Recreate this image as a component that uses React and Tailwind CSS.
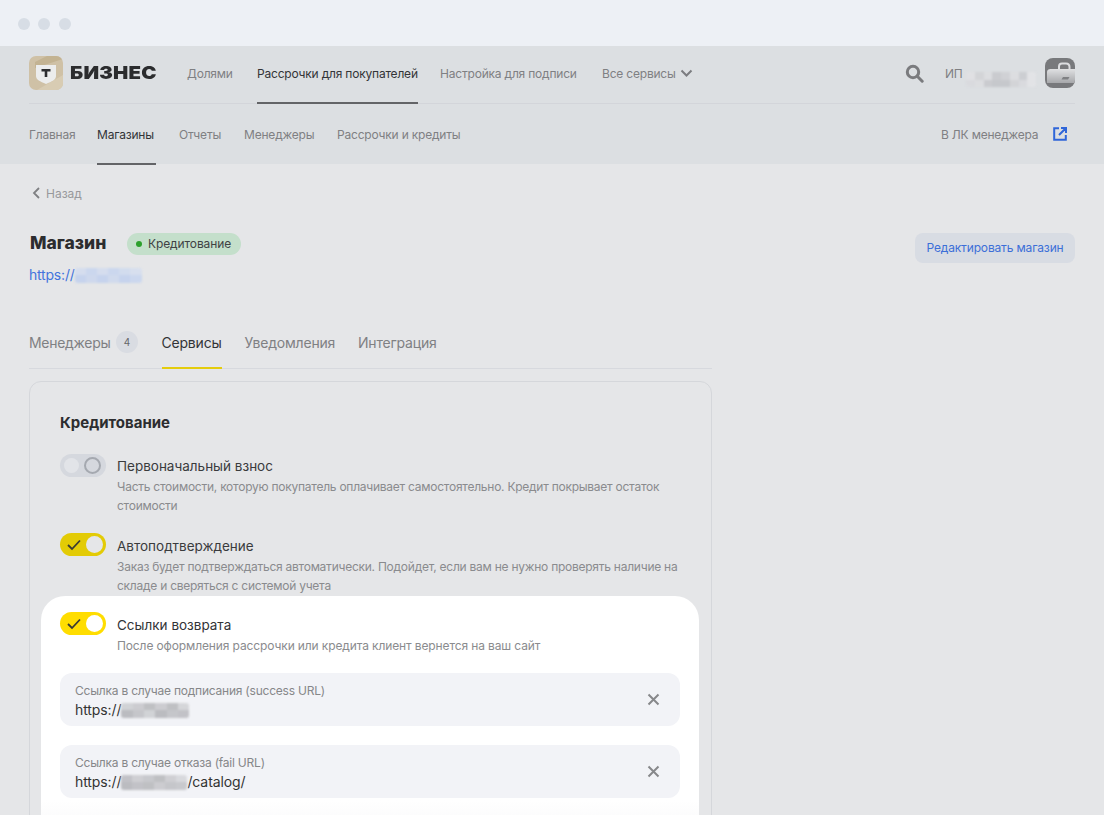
import React from "react";

const font = { fontFamily: '"Inter","Noto Sans",sans-serif' };

function Pix({ w, h = 15, color, base, cols }) {
  return (
    <span className="inline-flex overflow-hidden blur-[1px] align-middle rounded-[3px]" style={{ width: w, height: h, backgroundColor: base }}>
      {cols.map((c, i) => (
        <span key={i} className="flex-1 h-full flex flex-col">
          <span className="flex-1" style={{ backgroundColor: color, opacity: c[0] }} />
          <span className="flex-1" style={{ backgroundColor: color, opacity: c[1] }} />
        </span>
      ))}
    </span>
  );
}

function Toggle({ on, top, dim }) {
  return (
    <div
      className={`absolute left-[60px] w-[46px] h-[23px] rounded-full ${on ? (dim ? "bg-[#e3cb05]" : "bg-[#ffdd00]") : "bg-[#d5d8de]"}`}
      style={{ top }}
    >
      {on ? (
        <>
          <svg className="absolute left-[6px] top-[5px]" width="16" height="13" viewBox="0 0 16 13" fill="none">
            <path d="M2 7l4 4 8-8.5" stroke="#3a3a32" strokeWidth="1.8" />
          </svg>
          <div className={`absolute right-[3px] top-[3px] w-[17px] h-[17px] rounded-full ${dim ? "bg-[#e5e6e8]" : "bg-white"}`} />
        </>
      ) : (
        <>
          <div className="absolute left-[4px] top-[4px] w-[15px] h-[15px] rounded-full bg-[#e2e4e8]" />
          <div className="absolute right-[5px] top-[3px] w-[17px] h-[17px] rounded-full border-2 border-[#a5a9b0]" />
        </>
      )}
    </div>
  );
}

function Field({ top, label, children }) {
  return (
    <div className="absolute left-[60px] w-[620px] h-[53px] rounded-[12px] bg-[#f2f3f7]" style={{ top }}>
      <div className="absolute left-[15px] top-[10px] text-[12px] tracking-[-0.22px] leading-[15px] text-[#868789]">{label}</div>
      <div className="absolute left-[15px] top-[27px] text-[14px] tracking-[-0.1px] leading-[20px] text-[#333333] flex items-center">{children}</div>
      <svg className="absolute left-[587px] top-[20px]" width="13" height="13" viewBox="0 0 13 13" fill="none">
        <path d="M1.5 1.5l10 10M11.5 1.5l-10 10" stroke="#87888b" strokeWidth="2" />
      </svg>
    </div>
  );
}

const nav = "absolute text-[12px] tracking-[-0.2px] leading-[18px]";
const desc = "absolute left-[117px] w-[590px] text-[12px] tracking-[-0.25px] leading-[19px] text-[#8a8b8e]";
const tab = "absolute top-[334px] text-[14px] tracking-[-0.2px] leading-[18px]";
const rowTitle = "absolute left-[117px] text-[13.5px] leading-[18px]";

export default function App() {
  return (
    <div className="relative w-[1104px] h-[815px] overflow-hidden bg-[#e5e6e8]" style={font}>
      {/* window bar */}
      <div className="absolute inset-x-0 top-0 h-[46px] bg-[#edf0f5]">
        <div className="absolute left-[17.5px] top-[18px] w-[12px] h-[12px] rounded-full bg-[#d7dde5]" />
        <div className="absolute left-[38px] top-[18px] w-[12px] h-[12px] rounded-full bg-[#d7dde5]" />
        <div className="absolute left-[59px] top-[18px] w-[12px] h-[12px] rounded-full bg-[#d7dde5]" />
      </div>

      {/* header */}
      <div className="absolute inset-x-0 top-[46px] h-[118px] bg-[#dcdfe2]">
        <div className="absolute left-[29px] right-[29px] top-[57px] h-px bg-[#d3d5da]" />

        <div className="absolute left-[29px] top-[10px] w-[34px] h-[34px] rounded-[7px] overflow-hidden bg-[#cfc1a6]">
          <svg width="34" height="34" viewBox="0 0 34 34">
            <path d="M18 0H34V3L6 12V6Z" fill="#c3b392" />
            <path d="M8 34L34 19V34Z" fill="#d8ccb3" />
            <path d="M7 9H27V20C27 23.5 23 25.5 17 28 11 25.5 7 23.5 7 20Z" fill="#eceded" />
            <path d="M12.5 13H21.5V15.4H18.3V21H15.7V15.4H12.5Z" fill="#2d2e30" />
          </svg>
        </div>
        <div className="absolute left-[70px] top-[16px] text-[18px] leading-[22px] font-black text-[#2b2c2e] tracking-[0.2px] [transform:scaleX(1.13)] origin-left">БИЗНЕС</div>

        <div className={`${nav} left-[187px] top-[19px] text-[#7f8083]`}>Долями</div>
        <div className={`${nav} left-[257px] top-[19px] text-[#333437]`}>Рассрочки для покупателей</div>
        <div className="absolute left-[257px] top-[56px] w-[161px] h-[2px] bg-[#636467]" />
        <div className={`${nav} left-[440px] top-[19px] text-[#7f8083]`}>Настройка для подписи</div>
        <div className={`${nav} left-[602px] top-[19px] text-[#7f8083]`}>Все сервисы</div>
        <svg className="absolute left-[680px] top-[23px]" width="13" height="9" viewBox="0 0 13 9" fill="none">
          <path d="M1.5 1.5l5 5 5-5" stroke="#7b7c80" strokeWidth="2" />
        </svg>

        <svg className="absolute left-[905px] top-[18px]" width="19" height="19" viewBox="0 0 19 19" fill="none">
          <circle cx="8" cy="8" r="5.7" stroke="#7a7b7e" strokeWidth="3" />
          <path d="M12.5 12.5l4.7 4.7" stroke="#7a7b7e" strokeWidth="3" strokeLinecap="round" />
        </svg>
        <div className={`${nav} left-[945px] top-[19px] text-[#7f8083]`}>ИП</div>
        <div className="absolute left-[966px] top-[20px]">
          <Pix w={70} h={15} base="#e6e7e9" color="#c6c8cc" cols={[[0.2, 0.4], [0.6, 0.3], [0.3, 0.9], [0.9, 1], [0.7, 1], [0.3, 0.6], [0.8, 0.4], [0.1, 0.1]]} />
        </div>
        <div className="absolute left-[1045px] top-[12px] w-[30px] h-[30px] rounded-[8px] overflow-hidden bg-[#78797c]">
          <svg width="30" height="30" viewBox="0 0 30 30" fill="none">
            <defs>
              <linearGradient id="bag" x1="0" y1="0" x2="0" y2="1">
                <stop offset="0" stopColor="#dfe0e2" />
                <stop offset="1" stopColor="#a7a8ab" />
              </linearGradient>
            </defs>
            <path d="M14 11V8.5C14 6.5 15.5 5.5 17 5.5H21C23 5.5 24.5 6.5 24.5 9V11" stroke="#dcdde0" strokeWidth="2" />
            <path d="M2 14C2 12 3.5 11 5.5 11H30V25H2Z" fill="url(#bag)" />
            <path d="M18 19H24.5L23 21.5H16.5Z" fill="#7f8083" />
          </svg>
        </div>

        <div className={`${nav} left-[29px] top-[80px] text-[#7f8083]`}>Главная</div>
        <div className={`${nav} left-[97px] top-[80px] text-[#333437]`}>Магазины</div>
        <div className="absolute left-[97px] top-[117px] w-[59px] h-[2px] bg-[#636467]" />
        <div className={`${nav} left-[179px] top-[80px] text-[#7f8083]`}>Отчеты</div>
        <div className={`${nav} left-[244px] top-[80px] text-[#7f8083]`}>Менеджеры</div>
        <div className={`${nav} left-[337px] top-[80px] text-[#7f8083]`}>Рассрочки и кредиты</div>
        <div className={`${nav} left-[941px] top-[80px] text-[#7f8083]`}>В ЛК менеджера</div>
        <svg className="absolute left-[1053px] top-[81px]" width="14" height="14" viewBox="0 0 14 14" fill="none">
          <path d="M6 1.2H1.2V12.8H12.8V8M8 1H13V6M13 1L6 8" stroke="#2f66d9" strokeWidth="2" />
        </svg>
      </div>

      {/* back */}
      <svg className="absolute left-[32px] top-[187px]" width="9" height="12" viewBox="0 0 9 12" fill="none">
        <path d="M7 1L2 6l5 5" stroke="#7f8083" strokeWidth="1.8" />
      </svg>
      <div className="absolute left-[46px] top-[185px] text-[12px] leading-[18px] text-[#98999c]">Назад</div>

      {/* title */}
      <div className="absolute left-[30px] top-[232px] text-[17.5px] leading-[22px] font-extrabold text-[#2c2d2f]">Магазин</div>
      <div className="absolute left-[127px] top-[233px] w-[114px] h-[22px] rounded-full bg-[#c4dfcb] flex items-center pl-[9px] gap-[6px]">
        <div className="w-[6px] h-[6px] rounded-full bg-[#2ca02c]" />
        <span className="text-[12px] tracking-[-0.1px] leading-[16px] text-[#404244]">Кредитование</span>
      </div>
      <div className="absolute left-[29px] top-[265px] text-[14px] tracking-[-0.2px] leading-[20px] text-[#4274dd] flex items-center">
        https://
        <Pix w={67} h={15} base="#dfe4ee" color="#c6d3ed" cols={[[0.4, 1], [0.8, 0.7], [0.4, 1], [0.8, 0.6], [0.5, 1], [0.3, 0.8]]} />
      </div>
      <div className="absolute left-[915px] top-[233px] w-[160px] h-[30px] rounded-[8px] bg-[#d8dce3] flex items-center justify-center text-[12px] tracking-[-0.15px] text-[#3c6fd8]">
        Редактировать магазин
      </div>

      {/* tabs */}
      <div className={`${tab} left-[29px] tracking-[-0.3px] text-[#7f8083]`}>Менеджеры</div>
      <div className="absolute left-[116px] top-[331px] w-[22px] h-[22px] rounded-full bg-[#d9dce2] flex items-center justify-center text-[10px] text-[#66676a]">4</div>
      <div className={`${tab} left-[161.5px] text-[#333437]`}>Сервисы</div>
      <div className={`${tab} left-[244.5px] text-[#7f8083]`}>Уведомления</div>
      <div className={`${tab} left-[358px] text-[#7f8083]`}>Интеграция</div>
      <div className="absolute left-[29px] top-[368px] w-[683px] h-px bg-[#d7d9de]" />
      <div className="absolute left-[162px] top-[367px] w-[60px] h-[2px] bg-[#e4cc0c]" />

      {/* card */}
      <div className="absolute left-[29px] top-[381px] w-[683px] h-[460px] rounded-[12px] border border-[#d5d7db]" />
      <div className="absolute left-[60px] top-[413px] text-[15px] leading-[20px] font-bold text-[#2c2d2f]">Кредитование</div>

      <Toggle top={454} />
      <div className={`${rowTitle} top-[457px] text-[#3a3b3d]`}>Первоначальный взнос</div>
      <div className={`${desc} top-[477px]`}>
        Часть стоимости, которую покупатель оплачивает самостоятельно. Кредит покрывает остаток
        <br />
        стоимости
      </div>

      <Toggle top={533} on dim />
      <div className={`${rowTitle} top-[537px] text-[#3a3b3d]`}>Автоподтверждение</div>
      <div className={`${desc} top-[557px]`}>
        Заказ будет подтверждаться автоматически. Подойдет, если вам не нужно проверять наличие на
        <br />
        складе и сверяться с системой учета
      </div>

      {/* white panel */}
      <div className="absolute left-[41px] top-[596px] w-[658px] h-[240px] rounded-t-[24px] bg-gradient-to-b from-white from-[85%] to-[#f8f8f9]" />
      <Toggle top={612} on />
      <div className={`${rowTitle} top-[616px] text-[#333437]`}>Ссылки возврата</div>
      <div className="absolute left-[117px] top-[636px] w-[590px] text-[12px] tracking-[-0.12px] leading-[19px] text-[#8a8b8e]">
        После оформления рассрочки или кредита клиент вернется на ваш сайт
      </div>

      <Field top={673} label="Ссылка в случае подписания (success URL)">
        https://
        <Pix w={68} h={15} base="#dcdde0" color="#bbbcc0" cols={[[0.3, 1], [0.5, 0.7], [0.9, 0.3], [0.5, 1], [0.9, 0.7], [0.2, 0.8]]} />
      </Field>
      <Field top={745} label="Ссылка в случае отказа (fail URL)">
        https://
        <Pix w={66} h={15} base="#dcdde0" color="#bbbcc0" cols={[[0.8, 1], [0.4, 0.8], [0.6, 0.9], [0.9, 0.5], [0.4, 0.7], [0.1, 0.6]]} />
        /catalog/
      </Field>
    </div>
  );
}
